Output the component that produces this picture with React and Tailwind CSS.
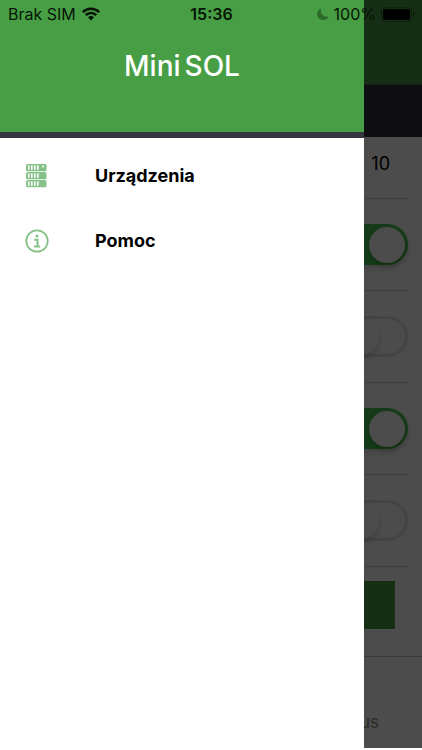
import React from "react";

const channels = [
  { id: "ch1", on: true },
  { id: "ch2", on: false },
  { id: "ch3", on: true },
  { id: "ch4", on: false },
];

function WifiIcon() {
  return (
    <svg viewBox="0 0 18 14" className="h-[14px] w-[18px]" fill="none" stroke="#061505" strokeWidth="2.6" aria-hidden="true">
      <path d="M0.8 5.2a11.6 11.6 0 0 1 16.4 0" />
      <path d="M3.7 8.2a7.5 7.5 0 0 1 10.6 0" />
      <path d="M6 10.3a4.2 4.2 0 0 1 6 0L9 13.4z" fill="#061505" stroke="none" />
    </svg>
  );
}

function MoonIcon() {
  return (
    <svg viewBox="0 0 12 12" className="h-3 w-3" fill="#2c6a2b" aria-hidden="true">
      <path d="M4.2 0.4A6 6 0 1 0 11.8 8.2 6 6 0 0 1 4.2 0.4z" />
    </svg>
  );
}

function BatteryIcon() {
  return (
    <svg viewBox="0 0 34 15" className="h-[15px] w-[34px]" aria-hidden="true">
      <rect x="0.5" y="0.5" width="30" height="14" rx="3.5" fill="none" stroke="#0e210d" />
      <rect x="2" y="2" width="27" height="11" rx="2" fill="#000" />
      <path d="M32 5c2 0.6 2 4.4 0 5z" fill="#0a1809" />
    </svg>
  );
}

function ServerIcon() {
  return (
    <svg viewBox="0 0 22 26" className="h-[26px] w-[22px]" aria-hidden="true">
      {[1, 9, 17].map((y) => (
        <g key={y}>
          <rect x="1" y={y} width="20.5" height="7.2" rx="1.5" fill="#86c288" />
          {[3, 6, 9, 12].map((x) => (
            <rect key={x} x={x} y={y + 1.4} width="1.6" height="4.4" fill="#fff" />
          ))}
        </g>
      ))}
      <circle cx="18" cy="3.6" r="1" fill="#fff" />
    </svg>
  );
}

function InfoIcon() {
  return (
    <svg viewBox="0 0 24 24" className="h-6 w-6" fill="none" stroke="#86c288" aria-hidden="true">
      <circle cx="12" cy="12" r="10.7" strokeWidth="1.8" />
      <circle cx="12" cy="7" r="1.6" fill="#86c288" stroke="none" />
      <path d="M9.2 10.8h3.3v6.4M9 17.5h6.2" strokeWidth="2" />
    </svg>
  );
}

function StatusBar() {
  return (
    <div className="absolute inset-x-0 top-0 z-20 grid h-7 grid-cols-3 items-center pl-2 pr-[7px] text-base text-[#061505]">
      <div className="flex items-center gap-[6px]">
        <span>Brak SIM</span>
        <WifiIcon />
      </div>
      <span className="text-center font-semibold">15:36</span>
      <div className="flex items-center justify-end gap-[5px]">
        <MoonIcon />
        <span>100%</span>
        <BatteryIcon />
      </div>
    </div>
  );
}

function Toggle({ id, on }) {
  return (
    <input
      id={id}
      type="checkbox"
      defaultChecked={on}
      aria-label={id}
      className="flex h-[41px] w-[68px] appearance-none items-center rounded-full border-[3px] border-[#e4e4e4] bg-white before:size-[36px] before:rounded-full before:bg-white before:shadow-[0_3px_6px_rgba(0,0,0,0.2)] checked:justify-end checked:border-[#46c650] checked:bg-[#46c650] checked:shadow-[0_3px_6px_rgba(0,0,0,0.15)]"
    />
  );
}

// Settings screen that stays dimmed under the open drawer
function SettingsScreen() {
  return (
    <main className="flex flex-1 flex-col bg-white">
      <div className="h-[84px] bg-[#479e45]" />
      <div className="h-[53px] border-t border-[#5a5a66] bg-[#343342]" />
      <div className="ml-4 mr-[14px] flex h-[62px] items-center justify-end border-b border-[#cccccc] pr-[18px] pb-[8px] text-lg text-black">
        10
      </div>
      {channels.map((c) => (
        <div key={c.id} className="ml-4 mr-[14px] flex h-[92px] items-center justify-end border-b border-[#cccccc]">
          <Toggle id={c.id} on={c.on} />
        </div>
      ))}
      <button type="button" aria-label="OK" className="mx-[27px] mt-[14px] h-12 bg-[#479e45]" />
      <nav className="mt-[27px] flex flex-1 items-center justify-end border-t border-[#c0c0c0] pr-[43px] pt-10 text-[17px] text-[#8e8e8e]">
        <a href="#status">Status</a>
      </nav>
    </main>
  );
}

function Drawer() {
  return (
    <aside className="absolute inset-y-0 left-0 right-[58px] z-10 bg-white">
      <header className="flex h-[138px] items-center justify-center gap-1 border-b-[6px] border-[#343642] bg-[#479e45] text-[28px] font-medium text-white">
        <span>Mini</span>
        <span>SOL</span>
      </header>
      <nav className="flex flex-col pt-[5px] text-lg font-bold text-black">
        <a href="#urzadzenia" className="flex h-[65px] items-center">
          <span className="flex w-[95px] pl-[25px]">
            <ServerIcon />
          </span>
          Urządzenia
        </a>
        <a href="#pomoc" className="flex h-[65px] items-center">
          <span className="flex w-[95px] pl-[25px]">
            <InfoIcon />
          </span>
          Pomoc
        </a>
      </nav>
    </aside>
  );
}

export default function App() {
  return (
    <div className="relative flex min-h-screen flex-col overflow-hidden bg-white pb-[2px] font-['Inter','Liberation_Sans',sans-serif]">
      <SettingsScreen />
      <div className="absolute inset-x-0 top-0 bottom-[2px] bg-black/70" />
      <Drawer />
      <StatusBar />
    </div>
  );
}
